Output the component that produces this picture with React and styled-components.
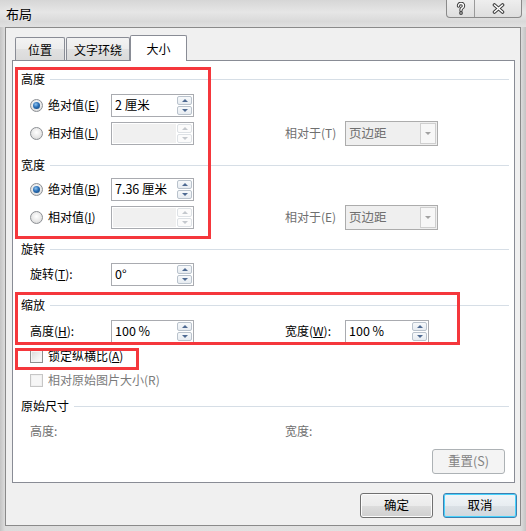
import React from "react";
import styled, { createGlobalStyle } from "styled-components";

const GlobalStyle = createGlobalStyle`
  html, body { margin: 0; padding: 0; }
  body {
    font-family: "Noto Sans CJK SC", "Noto Sans", sans-serif;
    font-size: 12px;
    color: #000;
  }
  u { text-underline-offset: 1px; }
`;

const Window = styled.div`
  width: 526px;
  height: 531px;
  display: flex;
  flex-direction: column;
  background: linear-gradient(90deg, #c4c4c4 0px, #dcdcdc 5px, #e2e2e2 50%, #dcdcdc calc(100% - 5px), #c4c4c4 100%);
  overflow: hidden;
`;

const TitleBar = styled.div`
  height: 27px;
  display: flex;
  align-items: flex-start;
  background: linear-gradient(180deg, #d6d6d6 0%, #e6e6e6 45%, #d9d9d9 80%, #e1e1e1 100%);
`;

const Title = styled.div`
  padding-left: 6px;
  line-height: 27px;
  font-size: 13px;
  text-shadow: 0 0 6px #f4f4f4;
`;

const Caption = styled.div`
  margin-left: auto;
  margin-right: 4px;
  height: 17px;
  display: flex;
  border: 1px solid #8a8a8a;
  border-top: none;
  border-radius: 0 0 4px 4px;
  background: linear-gradient(180deg, #eeeeee, #dedede);
  overflow: hidden;
`;

const CaptionButton = styled.div`
  width: ${(p) => p.$w}px;
  display: flex;
  align-items: center;
  justify-content: center;
  & + & { border-left: 1px solid #9a9a9a; }
`;

const Client = styled.div`
  flex: 1;
  margin: 0 5px 5px;
  border: 1px solid #8a8a8a;
  background: #f0f0f0;
  padding: 7px 5px 0 6px;
  display: flex;
  flex-direction: column;
`;

const Tabs = styled.div`
  height: 25px;
  display: flex;
  align-items: flex-end;
  padding-left: 3px;
`;

const Tab = styled.div`
  box-sizing: border-box;
  width: ${(p) => p.$w}px;
  margin-right: ${(p) => p.$mr || 0}px;
  height: ${(p) => (p.$active ? 26 : 23)}px;
  margin-bottom: ${(p) => (p.$active ? -1 : 0)}px;
  border: 1px solid #898c95;
  border-bottom: none;
  border-radius: 2px 2px 0 0;
  background: ${(p) =>
    p.$active
      ? "#fff"
      : "linear-gradient(180deg, #f3f3f3 0%, #ececec 50%, #e1e1e1 51%, #dadada 100%)"};
  position: relative;
  z-index: ${(p) => (p.$active ? 1 : 0)};
  display: flex;
  align-items: center;
  justify-content: center;
  line-height: 1;
  padding-top: ${(p) => (p.$active ? 0 : 2)}px;
`;

const Panel = styled.div`
  box-sizing: border-box;
  height: 423px;
  border: 1px solid #898c95;
  background: #fff;
  position: relative;
  padding: 10px 5px 0 8px;
  display: flex;
  flex-direction: column;
`;

const Section = styled.div`
  display: flex;
  align-items: center;
  height: 16px;
  margin-top: ${(p) => p.$mt || 0}px;
  line-height: 1;
  &::after {
    content: "";
    flex: 1;
    height: 1px;
    margin-left: 5px;
    background: #d6dee6;
  }
`;

const Row = styled.div`
  display: grid;
  grid-template-columns: 81px 83px 91px 60px auto;
  align-items: center;
  height: ${(p) => p.$h || 28}px;
  margin-top: ${(p) => p.$mt || 0}px;
  padding-left: 9px;
  line-height: 1;
`;

const Label = styled.span`
  color: ${(p) => (p.$disabled ? "#6f6f6f" : "#000")};
  white-space: nowrap;
`;

const Choice = styled.label`
  display: flex;
  align-items: center;
  gap: 5px;
  white-space: nowrap;
  color: ${(p) => (p.$disabled ? "#7a7a7a" : "#000")};
`;

const Radio = styled.span`
  box-sizing: border-box;
  width: 13px;
  height: 13px;
  border-radius: 50%;
  border: 1px solid #8c8f94;
  background: radial-gradient(circle at 50% 40%, #ffffff 0%, #e8e8e8 55%, #cfcfcf 100%);
  display: flex;
  align-items: center;
  justify-content: center;
  &::after {
    content: "";
    width: 7px;
    height: 7px;
    border-radius: 50%;
    display: ${(p) => (p.$checked ? "block" : "none")};
    background: radial-gradient(circle at 40% 35%, #8fc3ef 0%, #2a6fb6 45%, #123e6e 100%);
  }
`;

const Check = styled.span`
  box-sizing: border-box;
  width: 13px;
  height: 13px;
  border: 1px solid ${(p) => (p.$disabled ? "#c6c6c6" : "#8e8f8f")};
  background: ${(p) =>
    p.$disabled ? "#f6f6f6" : "linear-gradient(135deg, #d9d9d9 0%, #f2f2f2 60%, #ffffff 100%)"};
  box-shadow: inset 0 0 0 1px ${(p) => (p.$disabled ? "#f0f0f0" : "#f4f4f4")};
`;

const Spin = styled.div`
  box-sizing: border-box;
  width: ${(p) => p.$w || 83}px;
  height: 23px;
  border: 1px solid #a9abb0;
  background: #fff;
  display: flex;
  align-items: stretch;
`;

const SpinText = styled.div`
  flex: 1;
  margin: 1px;
  padding-left: 2px;
  display: flex;
  align-items: center;
  font-size: 12.5px;
  background: ${(p) => (p.$disabled ? "#f0f0f0" : "#fff")};
`;

const SpinButtons = styled.div`
  width: 15px;
  margin: 1px 1px 1px 0;
  display: flex;
  flex-direction: column;
  gap: 1px;
`;

const SpinButton = styled.div`
  flex: 1;
  border: 1px solid ${(p) => (p.$disabled ? "#dde1e5" : "#b9c2cc")};
  border-radius: 2px;
  background: ${(p) =>
    p.$disabled ? "#fbfbfb" : "linear-gradient(180deg, #f7f9fb 0%, #e7ecf1 100%)"};
  display: flex;
  align-items: center;
  justify-content: center;
  &::after {
    content: "";
    border-left: 3px solid transparent;
    border-right: 3px solid transparent;
    ${(p) => (p.$down ? "border-top" : "border-bottom")}: 3px solid
      ${(p) => (p.$disabled ? "#c4c8cd" : "#4f6a92")};
  }
`;

const Select = styled.div`
  box-sizing: border-box;
  width: 93px;
  height: 25px;
  border: 1px solid #acacac;
  background: #efefef;
  display: flex;
  align-items: stretch;
  color: #6f6f6f;
`;

const SelectText = styled.div`
  flex: 1;
  padding-left: 3px;
  display: flex;
  align-items: center;
  font-size: 12.5px;
`;

const SelectArrow = styled.div`
  box-sizing: border-box;
  width: 16px;
  margin: 1px 1px 1px 0;
  border: 1px solid #cfcfcf;
  background: #f7f7f7;
  display: flex;
  align-items: center;
  justify-content: center;
  &::after {
    content: "";
    border-left: 3px solid transparent;
    border-right: 3px solid transparent;
    border-top: 3px solid #a2a2a2;
  }
`;

const CheckRow = styled.div`
  height: 20px;
  margin-top: ${(p) => p.$mt || 0}px;
  padding-left: 9px;
  display: flex;
  align-items: center;
  line-height: 1;
`;

const ResetRow = styled.div`
  margin-top: 8px;
  display: flex;
  justify-content: flex-end;
  padding-right: 4px;
`;

const Button = styled.button`
  box-sizing: border-box;
  width: ${(p) => p.$w}px;
  height: 25px;
  padding: 0;
  font: inherit;
  font-size: 12.5px;
  line-height: 1;
  border-radius: 3px;
  border: 1px solid ${(p) => (p.$disabled ? "#adb2b5" : p.$focus ? "#3c7fb1" : "#707070")};
  color: ${(p) => (p.$disabled ? "#838383" : "#000")};
  background: ${(p) =>
    p.$disabled
      ? "#f4f4f4"
      : p.$focus
      ? "linear-gradient(180deg, #f1f5f8 0%, #e8edf1 50%, #dbe1e6 51%, #d0d7dd 100%)"
      : "linear-gradient(180deg, #f2f2f2 0%, #ebebeb 50%, #dddddd 51%, #cfcfcf 100%)"};
  box-shadow: inset 0 0 0 1px ${(p) => (p.$disabled ? "#f4f4f4" : p.$focus ? "#48d2fc" : "#fcfcfc")};
`;

const Footer = styled.div`
  margin-top: 10px;
  margin-right: -2px;
  display: flex;
  justify-content: flex-end;
  gap: 10px;
`;

const Mark = styled.div`
  position: absolute;
  left: ${(p) => p.$x - 13}px;
  top: ${(p) => p.$y - 61}px;
  width: ${(p) => p.$w}px;
  height: ${(p) => p.$h}px;
  box-sizing: border-box;
  border: 3px solid #f5373c;
  pointer-events: none;
  z-index: 2;
`;

const SpinBox = ({ value, disabled, width }) => (
  <Spin $w={width}>
    <SpinText $disabled={disabled}>{value}</SpinText>
    <SpinButtons>
      <SpinButton $disabled={disabled} />
      <SpinButton $disabled={disabled} $down />
    </SpinButtons>
  </Spin>
);

const Dropdown = ({ value }) => (
  <Select>
    <SelectText>{value}</SelectText>
    <SelectArrow />
  </Select>
);

const HelpIcon = () => (
  <svg width="10" height="13" viewBox="0 0 10 13">
    <g fill="none" strokeLinecap="round">
      <path d="M2.5 4 Q2.5 1.5 5 1.5 Q7.5 1.5 7.5 4 Q7.5 5.5 5.5 6.5 Q5 7 5 8.2" stroke="#3f3f3f" strokeWidth="3.4" />
      <circle cx="5" cy="11" r="1.3" fill="#fff" stroke="#3f3f3f" strokeWidth="1.2" />
      <path d="M2.5 4 Q2.5 1.5 5 1.5 Q7.5 1.5 7.5 4 Q7.5 5.5 5.5 6.5 Q5 7 5 8.2" stroke="#fff" strokeWidth="1.4" />
    </g>
  </svg>
);

const CloseIcon = () => (
  <svg width="13" height="11" viewBox="0 0 13 11">
    <g strokeLinecap="round">
      <path d="M2.5 2 L10.5 9 M10.5 2 L2.5 9" stroke="#3f3f3f" strokeWidth="3.6" />
      <path d="M2.5 2 L10.5 9 M10.5 2 L2.5 9" stroke="#fff" strokeWidth="1.6" />
    </g>
  </svg>
);

export default function App() {
  return (
    <>
      <GlobalStyle />
      <Window>
        <TitleBar>
          <Title>布局</Title>
          <Caption>
            <CaptionButton $w={27}>
              <HelpIcon />
            </CaptionButton>
            <CaptionButton $w={46}>
              <CloseIcon />
            </CaptionButton>
          </Caption>
        </TitleBar>
        <Client>
          <Tabs>
            <Tab $w={50} $mr={1}>位置</Tab>
            <Tab $w={64}>文字环绕</Tab>
            <Tab $w={57} $active>大小</Tab>
          </Tabs>
          <Panel>
            <Section>高度</Section>
            <Row $mt={4}>
              <Choice><Radio $checked /><span>绝对值(<u>E</u>)</span></Choice>
              <SpinBox value="2 厘米" />
            </Row>
            <Row>
              <Choice><Radio /><span>相对值(<u>L</u>)</span></Choice>
              <SpinBox disabled />
              <span />
              <Label $disabled>相对于(T)</Label>
              <Dropdown value="页边距" />
            </Row>

            <Section $mt={10}>宽度</Section>
            <Row $mt={2}>
              <Choice><Radio $checked /><span>绝对值(<u>B</u>)</span></Choice>
              <SpinBox value="7.36 厘米" />
            </Row>
            <Row>
              <Choice><Radio /><span>相对值(<u>I</u>)</span></Choice>
              <SpinBox disabled />
              <span />
              <Label $disabled>相对于(E)</Label>
              <Dropdown value="页边距" />
            </Row>

            <Section $mt={10}>旋转</Section>
            <Row $mt={3}>
              <Label>旋转(<u>T</u>):</Label>
              <SpinBox value="0°" />
            </Row>

            <Section $mt={9}>缩放</Section>
            <Row $mt={4}>
              <Label>高度(<u>H</u>):</Label>
              <SpinBox value="100 %" />
              <span />
              <Label>宽度(<u>W</u>):</Label>
              <SpinBox value="100 %" width={84} />
            </Row>

            <CheckRow $mt={1}>
              <Choice><Check /><span>锁定纵横比(<u>A</u>)</span></Choice>
            </CheckRow>
            <CheckRow $mt={4}>
              <Choice $disabled><Check $disabled /><span>相对原始图片大小(R)</span></Choice>
            </CheckRow>

            <Section $mt={8}>原始尺寸</Section>
            <Row $h={20} $mt={7}>
              <Label $disabled>高度:</Label>
              <span />
              <span />
              <Label $disabled>宽度:</Label>
            </Row>
            <ResetRow>
              <Button $w={73} $disabled>重置(S)</Button>
            </ResetRow>

            <Mark $x={15} $y={67} $w={196} $h={172} />
            <Mark $x={15} $y={292} $w={445} $h={53} />
            <Mark $x={15} $y={348} $w={124} $h={22} />
          </Panel>
          <Footer>
            <Button $w={73}>确定</Button>
            <Button $w={74} $focus>取消</Button>
          </Footer>
        </Client>
      </Window>
    </>
  );
}
